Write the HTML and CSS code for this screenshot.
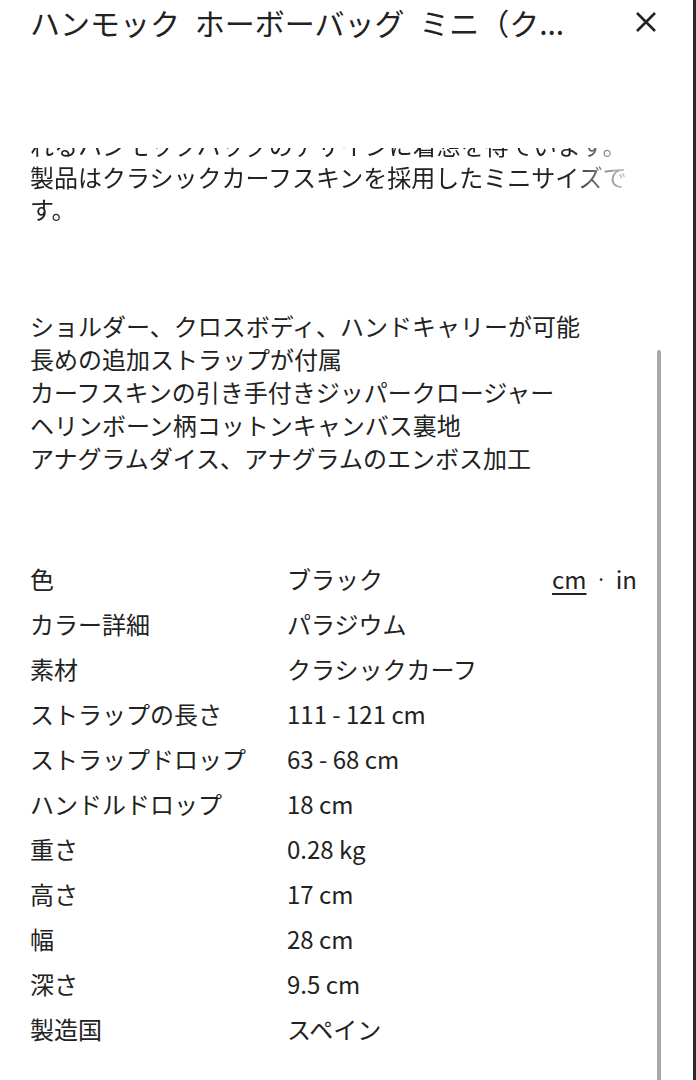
FILE: index.html
```html
<!DOCTYPE html>
<html lang="ja">
<head>
<meta charset="utf-8">
<title>ハンモック ホーボーバッグ ミニ</title>
<link rel="stylesheet" href="styles.css">
</head>
<body>
<div class="page">
  <header class="header">
    <h1 class="title">ハンモック ホーボーバッグ ミニ（ク...</h1>
    <button class="close" aria-label="閉じる">
      <svg width="22" height="22" viewBox="0 0 22 22"><path d="M2 2 L20 20 M20 2 L2 20" stroke="#222" stroke-width="2.6" fill="none" stroke-linecap="butt"/></svg>
    </button>
  </header>
  <div class="scroller">
    <div class="content">
      <div class="desc">
        <p class="desc-line">れるハンモックバッグのデザインに着想を得ています。</p>
        <p class="desc-line">製品はクラシックカーフスキンを採用したミニサイズで</p>
        <p class="desc-line">す。</p>
      </div>
      <ul class="features">
        <li>ショルダー、クロスボディ、ハンドキャリーが可能</li>
        <li>長めの追加ストラップが付属</li>
        <li>カーフスキンの引き手付きジッパークロージャー</li>
        <li>ヘリンボーン柄コットンキャンバス裏地</li>
        <li>アナグラムダイス、アナグラムのエンボス加工</li>
      </ul>
      <dl class="specs">
        <div class="row"><dt>色</dt><dd>ブラック</dd><div class="units"><span class="unit-on">cm</span><span class="dot">·</span><span>in</span></div></div>
        <div class="row"><dt>カラー詳細</dt><dd>パラジウム</dd></div>
        <div class="row"><dt>素材</dt><dd>クラシックカーフ</dd></div>
        <div class="row"><dt>ストラップの長さ</dt><dd>111 - 121 cm</dd></div>
        <div class="row"><dt>ストラップドロップ</dt><dd>63 - 68 cm</dd></div>
        <div class="row"><dt>ハンドルドロップ</dt><dd>18 cm</dd></div>
        <div class="row"><dt>重さ</dt><dd>0.28 kg</dd></div>
        <div class="row"><dt>高さ</dt><dd>17 cm</dd></div>
        <div class="row"><dt>幅</dt><dd>28 cm</dd></div>
        <div class="row"><dt>深さ</dt><dd>9.5 cm</dd></div>
        <div class="row"><dt>製造国</dt><dd>スペイン</dd></div>
      </dl>
    </div>
    <div class="track"><div class="thumb"></div></div>
  </div>
</div>
</body>
</html>
```
FILE: styles.css
```css
* { box-sizing: border-box; }
html, body { margin: 0; padding: 0; background: #fff; }
body {
  font-family: "Noto Sans CJK JP", "Noto Sans", sans-serif;
  color: #222;
}
.page {
  width: 696px;
  height: 1080px;
  overflow: hidden;
  border-right: 3px solid #2a2a2a;
  display: flex;
  flex-direction: column;
}
.header {
  display: flex;
  align-items: center;
  justify-content: space-between;
  height: 44px;
  padding: 0 36px 0 30px;
  flex-shrink: 0;
}
.title {
  margin: 0;
  font-size: 30px;
  font-weight: 400;
  line-height: 44px;
  white-space: nowrap;
  word-spacing: 8px;
}
.close {
  border: 0;
  background: none;
  padding: 0;
  width: 22px;
  height: 22px;
  display: block;
}
.close svg { display: block; }
.scroller {
  margin-top: 104px;
  flex: 1;
  overflow: hidden;
  display: flex;
}
.content {
  width: 640px;
  padding-left: 30px;
  flex-shrink: 0;
}
.desc {
  margin-top: -19px;
  -webkit-mask-image: linear-gradient(to right, #000 0, #000 540px, transparent 615px);
  mask-image: linear-gradient(to right, #000 0, #000 540px, transparent 615px);
}
.desc-line {
  margin: 0;
  font-size: 24px;
  line-height: 32px;
  white-space: nowrap;
}
.features {
  list-style: none;
  margin: 84px 0 0;
  padding: 0;
  font-size: 24px;
  line-height: 33px;
}
.specs {
  margin: 82px 0 0;
  font-size: 24px;
  line-height: 45px;
}
.row {
  display: grid;
  grid-template-columns: 257px 1fr auto;
  align-items: center;
}
.row dt, .row dd { margin: 0; white-space: nowrap; }
.units {
  display: flex;
  align-items: center;
  gap: 9px;
  padding-right: 3px;
}
.unit-on {
  text-decoration: underline;
  text-underline-offset: 4px;
  text-decoration-thickness: 1.5px;
}
.dot { font-size: 20px; }
.track {
  margin-left: 17px;
  width: 4px;
}
.thumb {
  margin-top: 202px;
  width: 4px;
  height: 900px;
  background: #a9a9a9;
  border-radius: 2px 2px 0 0;
}
```
